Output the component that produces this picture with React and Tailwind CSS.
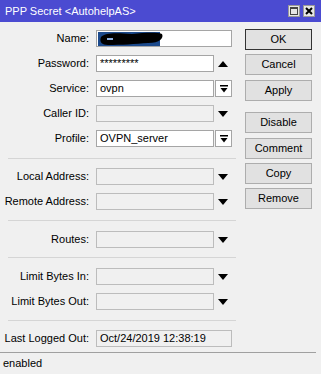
import React from "react";

const font = { fontFamily: '"Liberation Sans", Arial, sans-serif' };

const UpArrow = () => (
  <svg width="10" height="6" viewBox="0 0 10 6" className="block">
    <path d="M0 6 L5 0 L10 6 Z" fill="#000" />
  </svg>
);

const DownArrow = () => (
  <svg width="10" height="6" viewBox="0 0 10 6" className="block">
    <path d="M0 0 L10 0 L5 6 Z" fill="#000" />
  </svg>
);

const DropButton = () => (
  <div className="ml-[1px] w-[17px] h-[17px] border border-[#a5a5a5] bg-white flex items-center justify-center">
    <svg width="8" height="8" viewBox="0 0 8 8" className="block">
      <rect x="0" y="0" width="8" height="1.5" fill="#000" />
      <path d="M0.5 3 L7.5 3 L4 7.5 Z" fill="#000" />
    </svg>
  </div>
);

const Label = ({ children }) => (
  <div className="w-[90px] text-right text-[11px] text-black pr-[1px] leading-none">
    {children}
  </div>
);

const Field = ({ label, value, wide, arrow, drop, white, mt = "mt-[8px]" }) => (
  <div className={`flex items-center h-[17px] ${mt}`}>
    <Label>{label}</Label>
    <div
      className={`ml-[6px] h-[17px] border flex items-center px-[3px] text-[11px] leading-none ${
        wide ? "w-[136px]" : "w-[118px]"
      } ${white ? "bg-white border-[#a5a5a5]" : "bg-[#f0f0f0] border-[#bcbcbc]"}`}
    >
      {value}
    </div>
    {arrow === "up" && (
      <div className="w-[18px] flex justify-center">
        <UpArrow />
      </div>
    )}
    {arrow === "down" && (
      <div className="w-[18px] flex justify-center">
        <DownArrow />
      </div>
    )}
    {drop && <DropButton />}
  </div>
);

const Sep = ({ mt = "mt-[10px]", mb = "mb-[1px]" }) => (
  <div className={`ml-[8px] w-[228px] border-t border-[#d5d5d5] ${mt} ${mb}`} />
);

const Btn = ({ children, def, mt }) => (
  <button
    className={`w-[67px] h-[21px] bg-[#e1e1e1] border text-[11px] leading-none text-black ${
      def ? "border-[#333]" : "border-[#adadad]"
    } ${mt}`}
  >
    {children}
  </button>
);

export default function App() {
  return (
    <div className="w-[321px] h-[374px] bg-[#f0f0f0] flex flex-col overflow-hidden" style={font}>
      <div className="h-[22px] bg-[#4b4bd1] flex items-center pl-[5px] pr-[6px]">
        <span className="text-white text-[11px] leading-none flex-1">PPP Secret &lt;AutohelpAS&gt;</span>
        <div className="w-[12px] h-[12px] bg-[#e6e6e6] border border-[#999] flex items-center justify-center">
          <div className="w-[8px] h-[8px] border border-[#444] border-t-2" />
        </div>
        <div className="ml-[3px] w-[12px] h-[12px] bg-[#e6e6e6] border border-[#999] flex items-center justify-center">
          <svg width="8" height="8" viewBox="0 0 8 8" className="block">
            <path d="M1 1 L7 7 M7 1 L1 7" stroke="#000" strokeWidth="2" />
          </svg>
        </div>
      </div>

      <div className="flex flex-1">
        <div className="w-[240px] flex flex-col">
          <div className="flex items-center h-[17px] mt-[8px]">
            <Label>Name:</Label>
            <div className="ml-[6px] w-[136px] h-[17px] bg-white border border-[#a5a5a5] flex items-center px-[1px]">
              <svg width="66" height="14" viewBox="0 0 66 14" className="block">
                <rect x="0" y="0" width="62" height="14" fill="#1c4a8c" />
                <path
                  d="M3 5 C8 0 20 1 34 2 C46 1 58 0 64 2 C66 6 62 11 50 11 C38 12 22 13 10 13 C4 13 1 10 3 5 Z"
                  fill="#000"
                />
                <rect x="9" y="6" width="6" height="2" fill="#8fb0e0" />
              </svg>
            </div>
          </div>
          <Field label="Password:" value="*********" white arrow="up" />
          <Field label="Service:" value="ovpn" white drop />
          <Field label="Caller ID:" value="" arrow="down" />
          <Field label="Profile:" value="OVPN_server" white drop />
          <Sep mt="mt-[11px]" />
          <Field label="Local Address:" value="" arrow="down" />
          <Field label="Remote Address:" value="" arrow="down" />
          <Sep />
          <Field label="Routes:" value="" arrow="down" mt="mt-[9px]" />
          <Sep mt="mt-[9px]" />
          <Field label="Limit Bytes In:" value="" arrow="down" mt="mt-[9px]" />
          <Field label="Limit Bytes Out:" value="" arrow="down" />
          <Sep />
          <Field label="Last Logged Out:" value="Oct/24/2019 12:38:19" wide mt="mt-[8px]" />
        </div>

        <div className="ml-[5px] flex flex-col">
          <Btn def mt="mt-[7px]">OK</Btn>
          <Btn mt="mt-[4px]">Cancel</Btn>
          <Btn mt="mt-[5px]">Apply</Btn>
          <Btn mt="mt-[11px]">Disable</Btn>
          <Btn mt="mt-[5px]">Comment</Btn>
          <Btn mt="mt-[4px]">Copy</Btn>
          <Btn mt="mt-[4px]">Remove</Btn>
        </div>
      </div>

      <div className="h-[22px] border-t border-[#a0a0a0] mr-[5px] flex items-center pl-[3px]">
        <span className="text-[11px] leading-none text-black">enabled</span>
      </div>
    </div>
  );
}
